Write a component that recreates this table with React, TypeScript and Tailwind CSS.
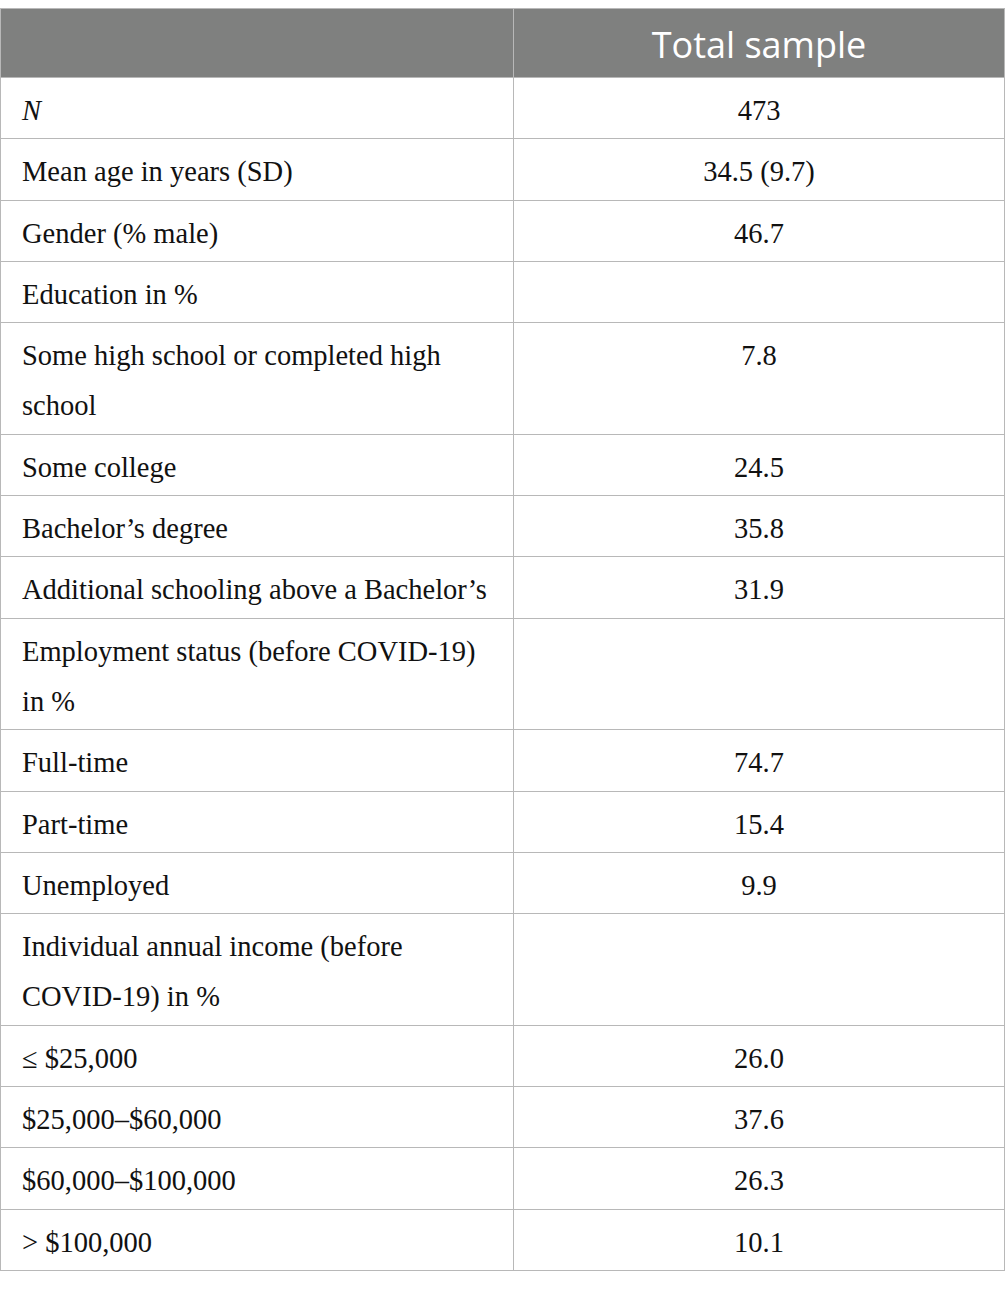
const nw = (s: string) => <span className="whitespace-nowrap">{s}</span>;

const rows: { label: React.ReactNode; value: string }[] = [
  { label: <i>N</i>, value: '473' },
  { label: 'Mean age in years (SD)', value: '34.5 (9.7)' },
  { label: 'Gender (% male)', value: '46.7' },
  { label: 'Education in %', value: '' },
  { label: 'Some high school or completed high school', value: '7.8' },
  { label: 'Some college', value: '24.5' },
  { label: 'Bachelor’s degree', value: '35.8' },
  { label: 'Additional schooling above a Bachelor’s', value: '31.9' },
  { label: <>Employment status (before {nw('COVID-19)')} in %</>, value: '' },
  { label: 'Full-time', value: '74.7' },
  { label: 'Part-time', value: '15.4' },
  { label: 'Unemployed', value: '9.9' },
  { label: <>Individual annual income (before {nw('COVID-19)')} in %</>, value: '' },
  { label: '≤ $25,000', value: '26.0' },
  { label: '$25,000–$60,000', value: '37.6' },
  { label: '$60,000–$100,000', value: '26.3' },
  { label: '> $100,000', value: '10.1' },
];

const App = () => {
  return (
    <div className="w-[1005px] bg-white pt-2">
      <table className="w-[1005px] table-fixed border-collapse">
        <colgroup>
          <col className="w-[513px]" />
          <col />
        </colgroup>
        <thead>
          <tr className="bg-[#7f807f]">
            <th className="h-[69px] border border-[#b8b8b8]" />
            <th
              className="h-[69px] border border-[#b8b8b8] pt-[3px] text-center text-[36px] font-normal text-white"
              style={{ fontFamily: '"Open Sans", Lato, sans-serif' }}
            >
              Total sample
            </th>
          </tr>
        </thead>
        <tbody style={{ fontFamily: '"Liberation Serif", "DejaVu Serif", serif' }}>
          {rows.map((r, i) => (
            <tr key={i}>
              <td className="border border-[#b8b8b8] pt-[8px] pb-[2px] pl-[21px] pr-[12px] align-top text-[28.5px] leading-[50.3px] text-[#111]">
                {r.label}
              </td>
              <td className="border border-[#b8b8b8] pt-[8px] pb-[2px] text-center align-top text-[28.5px] leading-[50.3px] text-[#111]">
                {r.value}
              </td>
            </tr>
          ))}
        </tbody>
      </table>
    </div>
  );
};

export default App;
